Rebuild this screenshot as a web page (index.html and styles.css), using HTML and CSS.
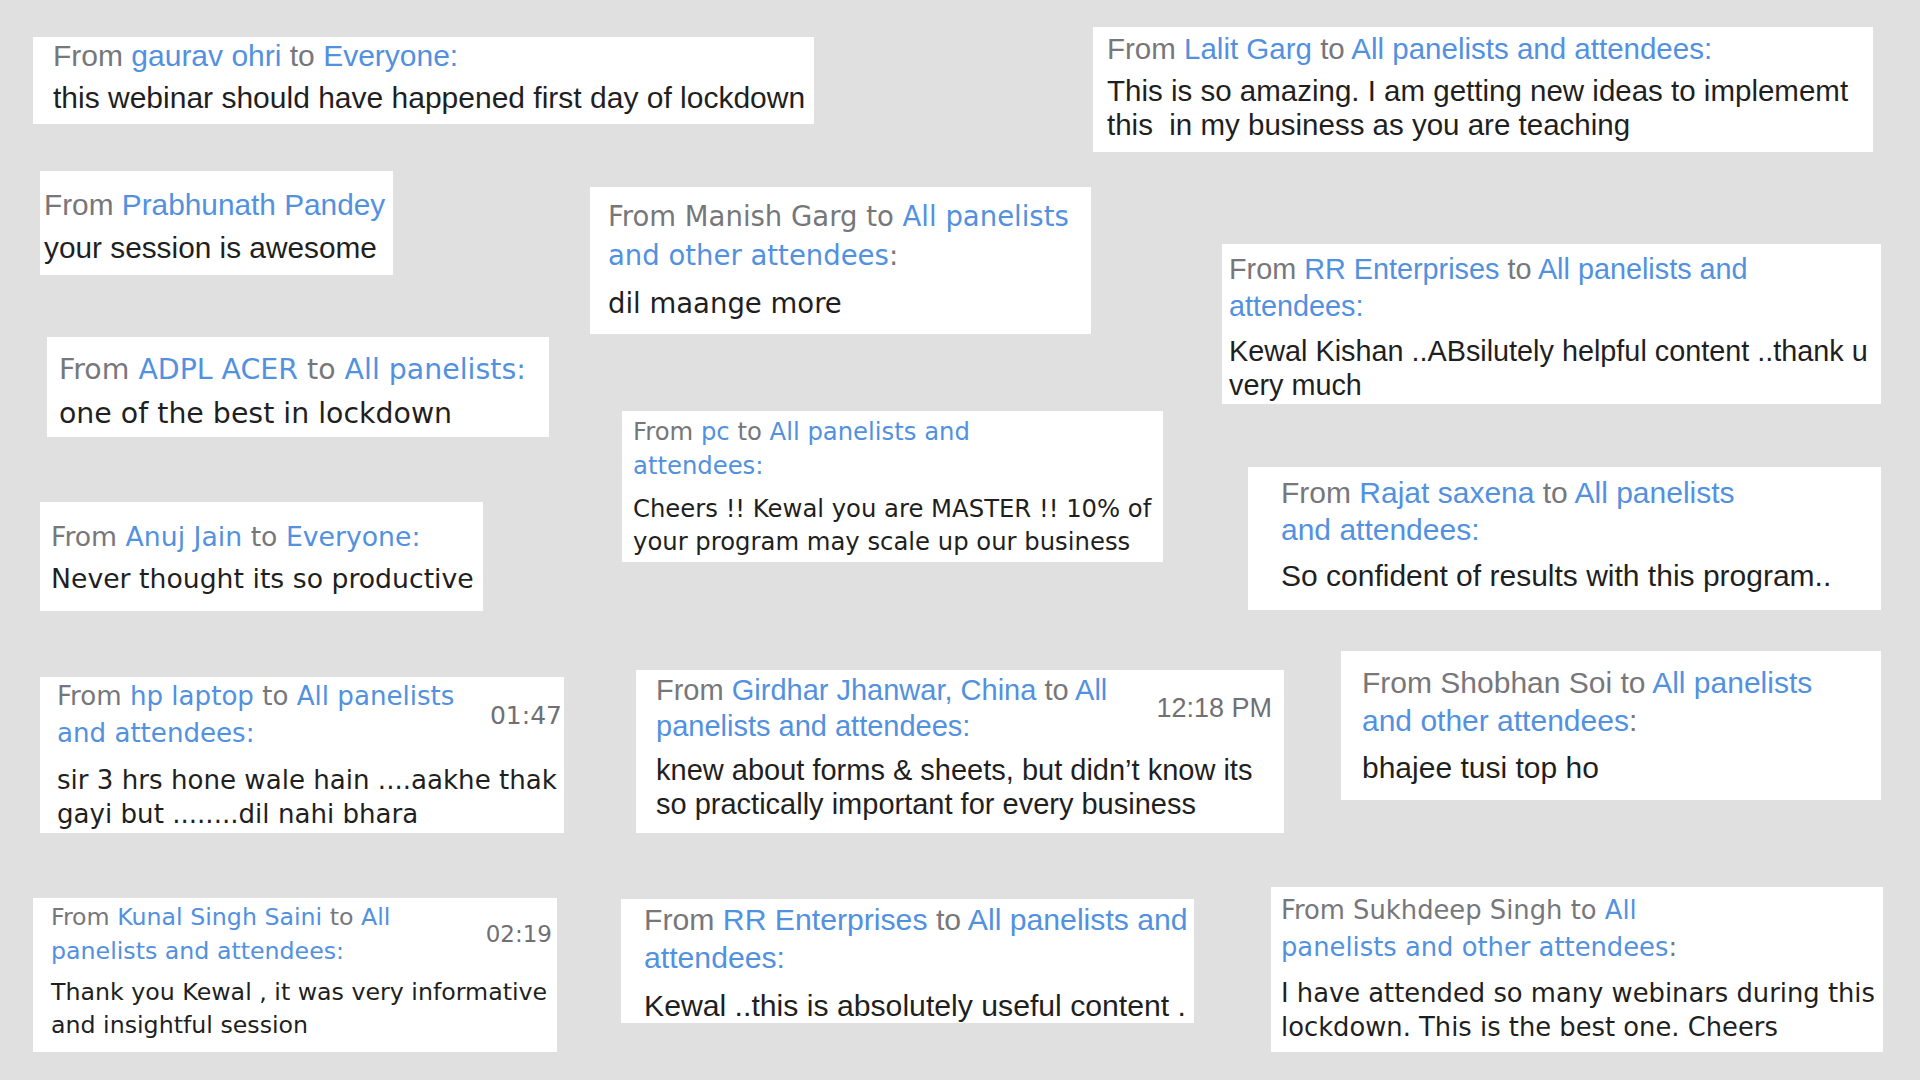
FILE: index.html
```html
<!DOCTYPE html>
<html lang="en">
<head>
<meta charset="utf-8">
<title>Webinar chat feedback</title>
<link rel="stylesheet" href="styles.css">
</head>
<body>
<main class="board">
  <article class="msg hv c1">
    <div class="head"><p class="from">From <span class="b">gaurav ohri</span> to <span class="b">Everyone:</span></p></div>
    <p class="body">this webinar should have happened first day of lockdown</p>
  </article>

  <article class="msg hv c2">
    <div class="head"><p class="from">From <span class="b">Lalit Garg</span> to <span class="b">All panelists and attendees:</span></p></div>
    <p class="body">This is so amazing. I am getting new ideas to implememt<br>this&nbsp; in my business as you are teaching</p>
  </article>

  <article class="msg hv c3">
    <div class="head"><p class="from">From <span class="b">Prabhunath Pandey</span></p></div>
    <p class="body">your session is awesome</p>
  </article>

  <article class="msg lg c4">
    <div class="head"><p class="from">From Manish Garg to <span class="b">All panelists<br>and other attendees</span>:</p></div>
    <p class="body">dil maange more</p>
  </article>

  <article class="msg hv c5">
    <div class="head"><p class="from">From <span class="b">RR Enterprises</span> to <span class="b">All panelists and<br>attendees:</span></p></div>
    <p class="body">Kewal Kishan ..ABsilutely helpful content ..thank u<br>very much</p>
  </article>

  <article class="msg lg c6">
    <div class="head"><p class="from">From <span class="b">ADPL ACER</span> to <span class="b">All panelists:</span></p></div>
    <p class="body">one of the best in lockdown</p>
  </article>

  <article class="msg lg c7">
    <div class="head"><p class="from">From <span class="b">pc</span> to <span class="b">All panelists and<br>attendees:</span></p></div>
    <p class="body">Cheers !! Kewal you are MASTER !! 10% of<br>your program may scale up our business</p>
  </article>

  <article class="msg hv c8">
    <div class="head"><p class="from">From <span class="b">Rajat saxena</span> to <span class="b">All panelists<br>and attendees:</span></p></div>
    <p class="body">So confident of results with this program..</p>
  </article>

  <article class="msg lg c9">
    <div class="head"><p class="from">From <span class="b">Anuj Jain</span> to <span class="b">Everyone:</span></p></div>
    <p class="body">Never thought its so productive</p>
  </article>

  <article class="msg lg c10">
    <div class="head"><p class="from">From <span class="b">hp laptop</span> to <span class="b">All panelists<br>and attendees:</span></p><span class="time">01:47</span></div>
    <p class="body">sir 3 hrs hone wale hain ....aakhe thak<br>gayi but ........dil nahi bhara</p>
  </article>

  <article class="msg hv c11">
    <div class="head"><p class="from">From <span class="b">Girdhar Jhanwar, China</span> to <span class="b">All<br>panelists and attendees:</span></p><span class="time">12:18 PM</span></div>
    <p class="body">knew about forms &amp; sheets, but didn’t know its<br>so practically important for every business</p>
  </article>

  <article class="msg hv c12">
    <div class="head"><p class="from">From Shobhan Soi to <span class="b">All panelists<br>and other attendees</span>:</p></div>
    <p class="body">bhajee tusi top ho</p>
  </article>

  <article class="msg lg c13">
    <div class="head"><p class="from">From <span class="b">Kunal Singh Saini</span> to <span class="b">All<br>panelists and attendees:</span></p><span class="time">02:19</span></div>
    <p class="body">Thank you Kewal , it was very informative<br>and insightful session</p>
  </article>

  <article class="msg hv c14">
    <div class="head"><p class="from">From <span class="b">RR Enterprises</span> to <span class="b">All panelists and<br>attendees:</span></p></div>
    <p class="body">Kewal ..this is absolutely useful content .</p>
  </article>

  <article class="msg lg c15">
    <div class="head"><p class="from">From Sukhdeep Singh to <span class="b">All<br>panelists and other attendees</span>:</p></div>
    <p class="body">I have attended so many webinars during this<br>lockdown. This is the best one. Cheers</p>
  </article>
</main>
</body>
</html>
```

FILE: styles.css
```css
html, body {
  margin: 0;
  padding: 0;
}

body {
  background: #e0e0e0;
}

.board {
  position: relative;
  width: 1920px;
  height: 1080px;
  overflow: hidden;
  background: #e0e0e0;
}

.msg {
  position: absolute;
  box-sizing: border-box;
  display: flex;
  flex-direction: column;
  background: #ffffff;
  overflow: hidden;
  padding: var(--pt) var(--pr, 0px) 0 var(--pl);
  font-size: var(--fs);
}

.hv {
  font-family: "Liberation Sans", Arial, Helvetica, sans-serif;
}

.lg {
  font-family: "DejaVu Sans", Verdana, sans-serif;
}

.head {
  display: flex;
  align-items: center;
  justify-content: space-between;
  gap: 12px;
}

.from {
  margin: 0;
  color: #77777b;
  line-height: var(--lhh);
  white-space: nowrap;
}

.from .b {
  color: #5291e0;
}

.time {
  color: #707074;
  font-size: var(--tfs);
  line-height: 1;
  white-space: nowrap;
}

.body {
  margin: var(--gap) 0 0;
  color: #1f1f22;
  line-height: var(--lhb);
  white-space: nowrap;
}

.c1  { left: 33px;   top: 37px;  width: 781px; height: 87px;  --fs: 30px;   --pt: 1px;  --pl: 20px; --lhh: 36px; --lhb: 36px; --gap: 6px; }
.c2  { left: 1093px; top: 27px;  width: 780px; height: 125px; --fs: 29.5px; --pt: 5px;  --pl: 14px; --lhh: 34px; --lhb: 34px; --gap: 8px; }
.c3  { left: 40px;   top: 171px; width: 353px; height: 104px; --fs: 29.8px; --pt: 16px; --pl: 4px;  --lhh: 36px; --lhb: 36px; --gap: 7px; }
.c4  { left: 590px;  top: 187px; width: 501px; height: 147px; --fs: 27.5px; --pt: 10px; --pl: 18px; --lhh: 39px; --lhb: 36px; --gap: 10px; }
.c5  { left: 1222px; top: 244px; width: 659px; height: 160px; --fs: 28.8px; --pt: 7px;  --pl: 7px;  --lhh: 37px; --lhb: 34px; --gap: 9px; }
.c6  { left: 47px;   top: 337px; width: 502px; height: 100px; --fs: 28.4px; --pt: 15px; --pl: 12px; --lhh: 36px; --lhb: 36px; --gap: 8px; }
.c7  { left: 622px;  top: 411px; width: 541px; height: 151px; --fs: 24.3px; --pt: 4px;  --pl: 11px; --lhh: 34px; --lhb: 33px; --gap: 9px; }
.c8  { left: 1248px; top: 467px; width: 633px; height: 143px; --fs: 30px;   --pt: 7px;  --pl: 33px; --lhh: 37px; --lhb: 36px; --gap: 10px; }
.c9  { left: 40px;   top: 502px; width: 443px; height: 109px; --fs: 26.7px; --pt: 18px; --pl: 11px; --lhh: 34px; --lhb: 34px; --gap: 8px; }
.c10 { left: 40px;   top: 677px; width: 524px; height: 156px; --fs: 26.1px; --pt: 1px;  --pl: 17px; --pr: 2px;  --lhh: 37px; --lhb: 34px; --gap: 11px; --tfs: 25px; }
.c11 { left: 636px;  top: 670px; width: 648px; height: 163px; --fs: 29px;   --pt: 3px;  --pl: 20px; --pr: 12px; --lhh: 35.5px; --lhb: 34px; --gap: 9px; --tfs: 27px; }
.c12 { left: 1341px; top: 651px; width: 540px; height: 149px; --fs: 30px;   --pt: 13px; --pl: 21px; --lhh: 38px; --lhb: 36px; --gap: 10px; }
.c13 { left: 33px;   top: 898px; width: 524px; height: 154px; --fs: 23.7px; --pt: 2px;  --pl: 18px; --pr: 5px;  --lhh: 34px; --lhb: 33px; --gap: 8px; --tfs: 23px; }
.c14 { left: 621px;  top: 899px; width: 573px; height: 124px; --fs: 30.2px; --pt: 2px;  --pl: 23px; --lhh: 38px; --lhb: 36px; --gap: 11px; }
.c15 { left: 1271px; top: 887px; width: 612px; height: 165px; --fs: 25.8px; --pt: 5px;  --pl: 10px; --lhh: 37px; --lhb: 34px; --gap: 10px; }
```
